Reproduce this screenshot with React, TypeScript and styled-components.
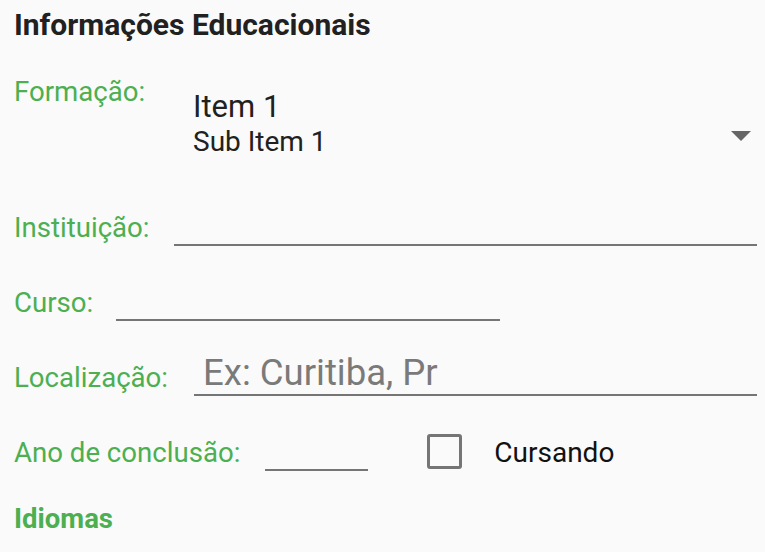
import React from "react";
import styled, { createGlobalStyle } from "styled-components";

const Global = createGlobalStyle`
  html, body { margin: 0; padding: 0; background: #fafafa; }
  body { font-family: Roboto, "Noto Sans", sans-serif; }
`;

const GREEN = "#4caf50";
const LINE = "#757575";

const Page = styled.div`
  width: 765px;
  height: 552px;
  box-sizing: border-box;
  padding: 8px 8px 0 14px;
  display: flex;
  flex-direction: column;
  background: #fafafa;
  overflow: hidden;
`;

const Heading = styled.h1`
  margin: 0;
  font-size: 30px;
  line-height: 33px;
  font-weight: 700;
  color: #212121;
`;

const SubHeading = styled.h2`
  margin: 32px 0 0;
  font-size: 27.5px;
  line-height: 32px;
  font-weight: 700;
  color: ${GREEN};
`;

const Label = styled.span`
  font-size: 27.6px;
  line-height: 32px;
  color: ${GREEN};
  white-space: nowrap;
  padding-bottom: 2px;
`;

const SpinnerRow = styled.div`
  margin-top: 35px;
  height: 95px;
  display: grid;
  grid-template-columns: 179px 1fr;
  align-items: start;
`;

const Spinner = styled.div`
  padding-top: 13px;
  display: flex;
  align-items: flex-start;
`;

const SpinnerTexts = styled.div`
  flex: 1;
  display: flex;
  flex-direction: column;
  color: #212121;
`;

const ItemTitle = styled.span`
  font-size: 31px;
  line-height: 36px;
`;

const ItemSub = styled.span`
  margin-top: 3px;
  font-size: 28px;
  line-height: 28px;
`;

const Arrow = styled.svg`
  margin-top: 42px;
  margin-right: 6px;
  width: 20px;
  height: 10px;
`;

const FieldRow = styled.div`
  height: 75px;
  display: flex;
  align-items: flex-end;
`;

const Field = styled.div<{ $width?: number; $gap?: number }>`
  margin-left: ${(p) => p.$gap ?? 24}px;
  ${(p) => (p.$width ? `width: ${p.$width}px;` : "flex: 1;")}
  border-bottom: 2px solid ${LINE};
  min-height: 10px;
  display: flex;
  align-items: flex-end;
`;

const Placeholder = styled.span`
  padding: 0 0 1px 9px;
  font-size: 36.5px;
  line-height: 40px;
  color: #7a7a7a;
  white-space: nowrap;
`;

const Checkbox = styled.span`
  margin: 0 0 2px 59px;
  width: 29px;
  height: 29px;
  border: 3px solid ${LINE};
  border-radius: 3px;
  flex: none;
`;

const CheckLabel = styled.span`
  margin-left: 32px;
  font-size: 28px;
  line-height: 32px;
  color: #111;
  padding-bottom: 2px;
`;

export default function App() {
  return (
    <>
      <Global />
      <Page>
        <Heading>Informações Educacionais</Heading>
        <SpinnerRow>
          <Label>Formação:</Label>
          <Spinner>
            <SpinnerTexts>
              <ItemTitle>Item 1</ItemTitle>
              <ItemSub>Sub Item 1</ItemSub>
            </SpinnerTexts>
            <Arrow viewBox="0 0 20 10">
              <polygon points="0,0 20,0 10,10" fill="#666" />
            </Arrow>
          </Spinner>
        </SpinnerRow>
        <FieldRow>
          <Label>Instituição:</Label>
          <Field />
        </FieldRow>
        <FieldRow>
          <Label>Curso:</Label>
          <Field $width={384} $gap={23} />
        </FieldRow>
        <FieldRow>
          <Label>Localização:</Label>
          <Field $gap={26}>
            <Placeholder>Ex: Curitiba, Pr</Placeholder>
          </Field>
        </FieldRow>
        <FieldRow>
          <Label>Ano de conclusão:</Label>
          <Field $width={103} $gap={25} />
          <Checkbox />
          <CheckLabel>Cursando</CheckLabel>
        </FieldRow>
        <SubHeading>Idiomas</SubHeading>
      </Page>
    </>
  );
}
